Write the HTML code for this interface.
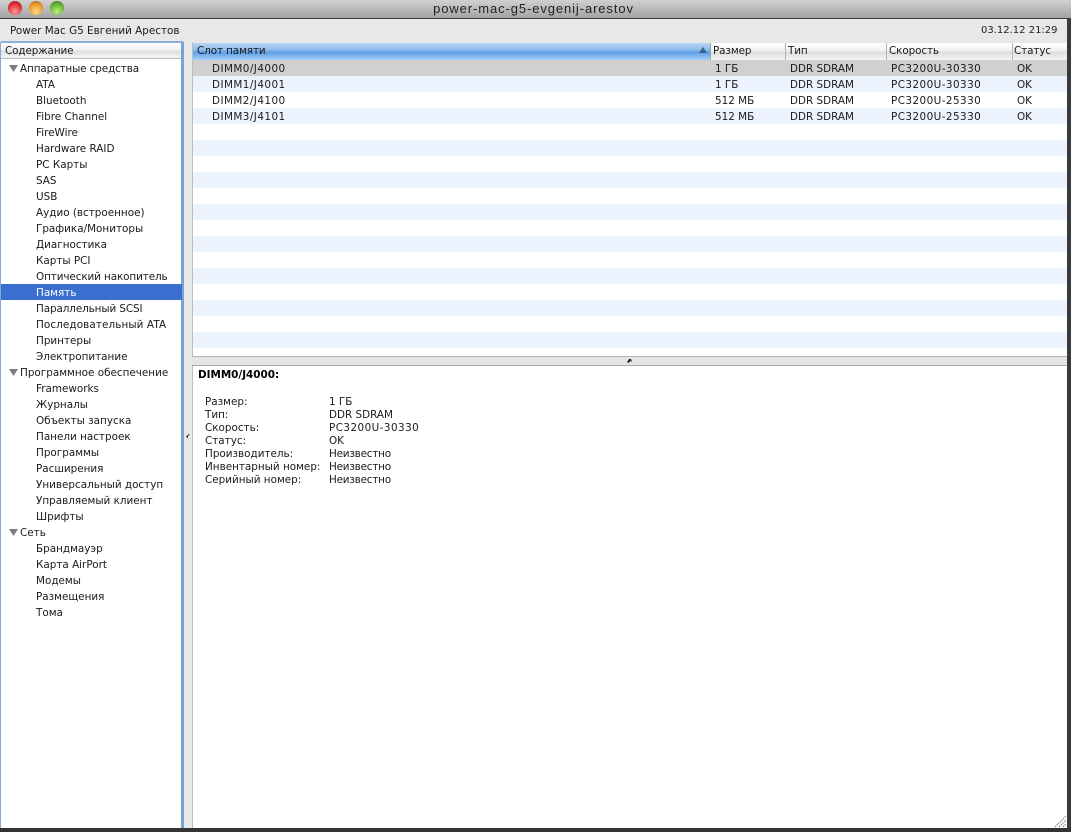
<!DOCTYPE html>
<html><head><meta charset="utf-8"><style>
html,body{margin:0;padding:0}
body{width:1071px;height:832px;overflow:hidden;position:relative;background:#e8e8e8;font-family:"DejaVu Sans","Liberation Sans",sans-serif;font-size:10.4px;color:#1a1a1a;filter:blur(.3px)}
.a{position:absolute;white-space:nowrap}
.t{line-height:16px;height:16px;margin-top:1px}
.d{letter-spacing:.45px}
.n{letter-spacing:-.2px}
.hd{height:17px;top:43px;line-height:17px;background:linear-gradient(#fff 0,#f1f1f1 45%,#dedede 55%,#f4f4f4 100%);border-right:1px solid #b5b5b5;box-sizing:border-box;padding-left:2px;letter-spacing:-.1px}
.stripe{left:193px;width:874px;height:16px;background:#edf3fe}
.dt{line-height:13px;height:13px;margin-top:1px}
</style></head><body>
<!-- title bar -->
<div class="a" style="left:0;top:0;width:1071px;height:18px;background:linear-gradient(#d0d0d0,#a4a4a4)"></div>
<div class="a" style="left:0;top:18px;width:1071px;height:1px;background:#3c3c3c"></div>
<div class="a" style="left:8px;top:1px;width:14px;height:14px;border-radius:50%;background:radial-gradient(circle at 50% 75%,#ff9a9a,#e02a35 60%,#8e2028)"></div>
<div class="a" style="left:29px;top:1px;width:14px;height:14px;border-radius:50%;background:radial-gradient(circle at 50% 75%,#ffdc80,#e8952a 60%,#95601f)"></div>
<div class="a" style="left:50px;top:1px;width:14px;height:14px;border-radius:50%;background:radial-gradient(circle at 50% 75%,#bdf07a,#62b133 60%,#3f7322)"></div>
<div class="a" style="left:0;top:0;width:1067px;height:18px;line-height:17px;text-align:center;font-size:13px;color:#222;font-family:'Liberation Sans',sans-serif;letter-spacing:.9px">power-mac-g5-evgenij-arestov</div>
<!-- toolbar -->
<div class="a t" style="left:10px;top:22px">Power Mac G5 Евгений Арестов</div>
<div class="a t" style="left:981px;top:22px;font-size:10px;color:#222">03.12.12 21:29</div>

<!-- sidebar -->
<div class="a" style="left:0;top:41px;width:184px;height:787px;background:#fff;overflow:hidden">
<div class="a" style="left:0;top:0;width:184px;height:2px;background:#8fb0dc;border-radius:3px 3px 0 0"></div>
</div>
<div class="a" style="left:181px;top:42px;width:3px;height:786px;background:#7ba2d6"></div>
<div class="a" style="left:0;top:42px;width:1px;height:786px;background:#86a9d6"></div>
<div class="a" style="left:1px;top:43px;width:180px;height:16px;line-height:17px;padding-left:4px;box-sizing:border-box;background:linear-gradient(#fff 0,#f2f2f2 45%,#e0e0e0 55%,#f4f4f4 100%);border-bottom:1px solid #bbb;letter-spacing:-.1px">Содержание</div>
<div class="a" style="left:1px;top:284px;width:181px;height:16px;background:#3a6fd0"></div>

<svg class="a" style="left:9px;top:65px" width="9" height="7"><polygon points="0,0 9,0 4.5,7" fill="#7d7d7d"/></svg>
<svg class="a" style="left:9px;top:369px" width="9" height="7"><polygon points="0,0 9,0 4.5,7" fill="#7d7d7d"/></svg>
<svg class="a" style="left:9px;top:529px" width="9" height="7"><polygon points="0,0 9,0 4.5,7" fill="#7d7d7d"/></svg>

<div class="a t" style="left:20px;top:60px;letter-spacing:-.1px">Аппаратные средства</div>
<div class="a t" style="left:36px;top:76px">ATA</div>
<div class="a t" style="left:36px;top:92px">Bluetooth</div>
<div class="a t" style="left:36px;top:108px">Fibre Channel</div>
<div class="a t" style="left:36px;top:124px">FireWire</div>
<div class="a t" style="left:36px;top:140px">Hardware RAID</div>
<div class="a t" style="left:36px;top:156px">PC Карты</div>
<div class="a t" style="left:36px;top:172px">SAS</div>
<div class="a t" style="left:36px;top:188px">USB</div>
<div class="a t" style="left:36px;top:204px">Аудио (встроенное)</div>
<div class="a t" style="left:36px;top:220px">Графика/Мониторы</div>
<div class="a t" style="left:36px;top:236px">Диагностика</div>
<div class="a t" style="left:36px;top:252px">Карты PCI</div>
<div class="a t" style="left:36px;top:268px;letter-spacing:-.1px">Оптический накопитель</div>
<div class="a t" style="left:36px;top:284px;color:#fff">Память</div>
<div class="a t" style="left:36px;top:300px;letter-spacing:-.1px">Параллельный SCSI</div>
<div class="a t" style="left:36px;top:316px;letter-spacing:.1px">Последовательный ATA</div>
<div class="a t" style="left:36px;top:332px">Принтеры</div>
<div class="a t" style="left:36px;top:348px">Электропитание</div>
<div class="a t" style="left:20px;top:364px">Программное обеспечение</div>
<div class="a t" style="left:36px;top:380px">Frameworks</div>
<div class="a t" style="left:36px;top:396px">Журналы</div>
<div class="a t" style="left:36px;top:412px">Объекты запуска</div>
<div class="a t" style="left:36px;top:428px">Панели настроек</div>
<div class="a t" style="left:36px;top:444px">Программы</div>
<div class="a t" style="left:36px;top:460px">Расширения</div>
<div class="a t" style="left:36px;top:476px">Универсальный доступ</div>
<div class="a t" style="left:36px;top:492px">Управляемый клиент</div>
<div class="a t" style="left:36px;top:508px">Шрифты</div>
<div class="a t" style="left:20px;top:524px">Сеть</div>
<div class="a t" style="left:36px;top:540px">Брандмауэр</div>
<div class="a t" style="left:36px;top:556px">Карта AirPort</div>
<div class="a t" style="left:36px;top:572px">Модемы</div>
<div class="a t" style="left:36px;top:588px">Размещения</div>
<div class="a t" style="left:36px;top:604px">Тома</div>

<!-- vertical splitter mark -->
<svg class="a" style="left:185px;top:433px" width="6" height="6"><path d="M1 4 L3 1.5 L5 1.5 L3 3 L3 5 Z" fill="#222"/></svg>
<div class="a" style="left:192px;top:42px;width:1px;height:786px;background:#bdbdbd"></div>

<!-- table -->
<div class="a" style="left:193px;top:43px;width:874px;height:314px;background:#fff"></div>
<div class="a hd" style="left:193px;width:518px;padding-left:4px;background:linear-gradient(#b9d6f5 0,#8fbcec 40%,#5d9de6 55%,#a5d0f7 100%);border-right:1px solid #8aa">Слот памяти</div>
<svg class="a" style="left:699px;top:47px" width="8" height="6"><polygon points="4,0 8,6 0,6" fill="#3d5f8c"/></svg>
<div class="a hd" style="left:711px;width:75px">Размер</div>
<div class="a hd" style="left:786px;width:101px">Тип</div>
<div class="a hd" style="left:887px;width:126px">Скорость</div>
<div class="a hd" style="left:1013px;width:54px;border-right:0;padding-left:1px">Статус</div>

<div class="a" style="left:193px;top:60px;width:874px;height:16px;background:#d0d0d0"></div>
<div class="a stripe" style="top:76px"></div>
<div class="a stripe" style="top:108px"></div>
<div class="a stripe" style="top:140px"></div>
<div class="a stripe" style="top:172px"></div>
<div class="a stripe" style="top:204px"></div>
<div class="a stripe" style="top:236px"></div>
<div class="a stripe" style="top:268px"></div>
<div class="a stripe" style="top:300px"></div>
<div class="a stripe" style="top:332px"></div>

<div class="a t d" style="left:212px;top:60px">DIMM0/J4000</div>
<div class="a t" style="left:715px;top:60px">1 ГБ</div>
<div class="a t" style="left:790px;top:60px">DDR SDRAM</div>
<div class="a t d" style="left:891px;top:60px">PC3200U-30330</div>
<div class="a t" style="left:1017px;top:60px">OK</div>

<div class="a t d" style="left:212px;top:76px">DIMM1/J4001</div>
<div class="a t" style="left:715px;top:76px">1 ГБ</div>
<div class="a t" style="left:790px;top:76px">DDR SDRAM</div>
<div class="a t d" style="left:891px;top:76px">PC3200U-30330</div>
<div class="a t" style="left:1017px;top:76px">OK</div>

<div class="a t d" style="left:212px;top:92px">DIMM2/J4100</div>
<div class="a t" style="left:715px;top:92px">512 МБ</div>
<div class="a t" style="left:790px;top:92px">DDR SDRAM</div>
<div class="a t d" style="left:891px;top:92px">PC3200U-25330</div>
<div class="a t" style="left:1017px;top:92px">OK</div>

<div class="a t d" style="left:212px;top:108px">DIMM3/J4101</div>
<div class="a t" style="left:715px;top:108px">512 МБ</div>
<div class="a t" style="left:790px;top:108px">DDR SDRAM</div>
<div class="a t d" style="left:891px;top:108px">PC3200U-25330</div>
<div class="a t" style="left:1017px;top:108px">OK</div>

<!-- horizontal splitter -->
<div class="a" style="left:192px;top:356px;width:875px;height:1px;background:#b5b5b5"></div>
<div class="a" style="left:192px;top:357px;width:875px;height:8px;background:#e4e4e4"></div>
<div class="a" style="left:192px;top:365px;width:875px;height:1px;background:#a8a8a8"></div>
<svg class="a" style="left:626px;top:358px" width="7" height="6"><path d="M1 4 L3 1 L5 1 L6 4 L4 3 L3 5 Z" fill="#222"/></svg>

<!-- detail -->
<div class="a" style="left:193px;top:366px;width:874px;height:462px;background:#fff"></div>
<div class="a dt" style="left:198px;top:368px;font-weight:bold;color:#000">DIMM0/J4000:</div>
<div class="a dt" style="left:205px;top:395px">Размер:</div><div class="a dt" style="left:329px;top:395px">1 ГБ</div>
<div class="a dt" style="left:205px;top:408px">Тип:</div><div class="a dt" style="left:329px;top:408px">DDR SDRAM</div>
<div class="a dt" style="left:205px;top:421px">Скорость:</div><div class="a dt d" style="left:329px;top:421px">PC3200U-30330</div>
<div class="a dt" style="left:205px;top:434px">Статус:</div><div class="a dt" style="left:329px;top:434px">OK</div>
<div class="a dt" style="left:205px;top:447px">Производитель:</div><div class="a dt n" style="left:329px;top:447px">Неизвестно</div>
<div class="a dt" style="left:205px;top:460px">Инвентарный номер:</div><div class="a dt n" style="left:329px;top:460px">Неизвестно</div>
<div class="a dt" style="left:205px;top:473px">Серийный номер:</div><div class="a dt n" style="left:329px;top:473px">Неизвестно</div>

<!-- resize grip -->
<svg class="a" style="left:1054px;top:815px" width="13" height="13"><path d="M1 12 L12 1 M5 12 L12 5 M9 12 L12 9" stroke="#8a8a8a" stroke-width="1.2" stroke-dasharray="1.5 .8" fill="none"/></svg>

<!-- window edges -->
<div class="a" style="left:1067px;top:19px;width:4px;height:813px;background:#3a3a3a"></div>
<div class="a" style="left:0;top:828px;width:1071px;height:4px;background:#333"></div>
</body></html>
